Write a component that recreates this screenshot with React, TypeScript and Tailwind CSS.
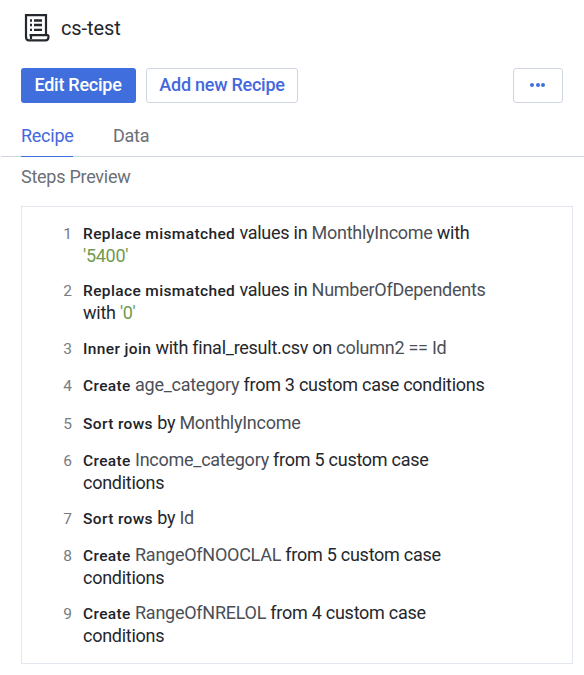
import React from "react";

type Part = { t: string; k?: "b" | "c" | "s" };
const steps: { h: string; lines: Part[][] }[] = [
  { h: "h-[57px]", lines: [[{ t: "Replace mismatched", k: "b" }, { t: " values in " }, { t: "MonthlyIncome", k: "c" }, { t: " with" }], [{ t: "'5400'", k: "s" }]] },
  { h: "h-[58px]", lines: [[{ t: "Replace mismatched", k: "b" }, { t: " values in " }, { t: "NumberOfDependents", k: "c" }], [{ t: "with " }, { t: "'0'", k: "s" }]] },
  { h: "h-[37px]", lines: [[{ t: "Inner join", k: "b" }, { t: " with final_result.csv on " }, { t: "column2 == Id", k: "c" }]] },
  { h: "h-[38px]", lines: [[{ t: "Create", k: "b" }, { t: " " }, { t: "age_category", k: "c" }, { t: " from 3 custom case conditions" }]] },
  { h: "h-[37px]", lines: [[{ t: "Sort rows", k: "b" }, { t: " by " }, { t: "MonthlyIncome", k: "c" }]] },
  { h: "h-[58px]", lines: [[{ t: "Create", k: "b" }, { t: " " }, { t: "Income_category", k: "c" }, { t: " from 5 custom case" }], [{ t: "conditions" }]] },
  { h: "h-[37px]", lines: [[{ t: "Sort rows", k: "b" }, { t: " by " }, { t: "Id", k: "c" }]] },
  { h: "h-[58px]", lines: [[{ t: "Create", k: "b" }, { t: " " }, { t: "RangeOfNOOCLAL", k: "c" }, { t: " from 5 custom case" }], [{ t: "conditions" }]] },
  { h: "h-[58px]", lines: [[{ t: "Create", k: "b" }, { t: " " }, { t: "RangeOfNRELOL", k: "c" }, { t: " from 4 custom case" }], [{ t: "conditions" }]] },
];

const tone = {
  b: "text-[15.5px] font-medium tracking-[0.37px] text-[#212329]",
  c: "text-[#4b4f57]",
  s: "text-[#6f9a4e]",
};

export default function App() {
  return (
    <main className="h-[675px] w-[584px] overflow-hidden bg-white font-['Roboto',sans-serif] text-[18px] tracking-[-0.26px] text-[#25272d]">
      <header className="flex h-[68px] items-start pl-[24px] pt-[14px]">
        <svg width="26" height="28" viewBox="0 0 26 28" fill="none" stroke="#25282d" strokeWidth="2.2">
          <path d="M2 22V1.2h20V21M5.5 21.2h17.8c1 0 1.2.8 1.2 1.6 0 2.4-1 3.6-3 3.6H5c-2 0-3-1.5-3-3.6V21M7 21.5v3.5" />
          <path d="M6 6.5h2M10 6.5h8M6 11h2M10 11h8M6 15.8h2M10 15.8h8" strokeWidth="2.3" />
        </svg>
        <h1 className="ml-[11px] text-[20px] leading-[28px] tracking-[-0.1px]">cs-test</h1>
      </header>
      <div className="flex h-[35px] pl-[21px] pr-[21px] font-medium">
        <button className="w-[115px] rounded-[3px] bg-[#406fdd] pb-[2px] pr-px text-white">Edit Recipe</button>
        <button className="ml-[10px] w-[152px] rounded-[3px] border border-[#cfd5e2] pb-[2px] text-[#4568dc]">Add new Recipe</button>
        <button className="ml-auto flex w-[50px] items-center justify-center gap-[1.5px] rounded-[3px] border border-[#cfd5e2] pb-px pr-px">
          <i className="size-[4px] rounded-full bg-[#406fdd]" />
          <i className="size-[4px] rounded-full bg-[#406fdd]" />
          <i className="size-[4px] rounded-full bg-[#406fdd]" />
        </button>
      </div>
      <nav className="ml-px mt-[13px] flex h-[41px] gap-[40px] border-b border-[#cfd5e2] pl-[20px] leading-[40px] text-[#6c7077]">
        <span className="h-[41px] w-[52px] border-b border-[#406fdd] text-[#4568dc]">Recipe</span>
        <span>Data</span>
      </nav>
      <h2 className="h-[49px] pl-[21px] leading-[40px] text-[#6c7077]">Steps Preview</h2>
      <ol className="ml-[21px] h-[458px] w-[552px] border border-[#e2e6ee] pt-[14px]">
        {steps.map((s, i) => (
          <li key={i} className={`flex ${s.h} leading-[23px]`}>
            <span className="w-[50px] pt-[2px] text-right text-[15.5px] tracking-normal text-[#777b82]">{i + 1}</span>
            <div className="ml-[11px]">
              {s.lines.map((line, j) => (
                <p key={j} className="h-[23px] whitespace-pre">
                  {line.map((p, n) => (
                    <span key={n} className={p.k ? tone[p.k] : ""}>{p.t}</span>
                  ))}
                </p>
              ))}
            </div>
          </li>
        ))}
      </ol>
    </main>
  );
}
